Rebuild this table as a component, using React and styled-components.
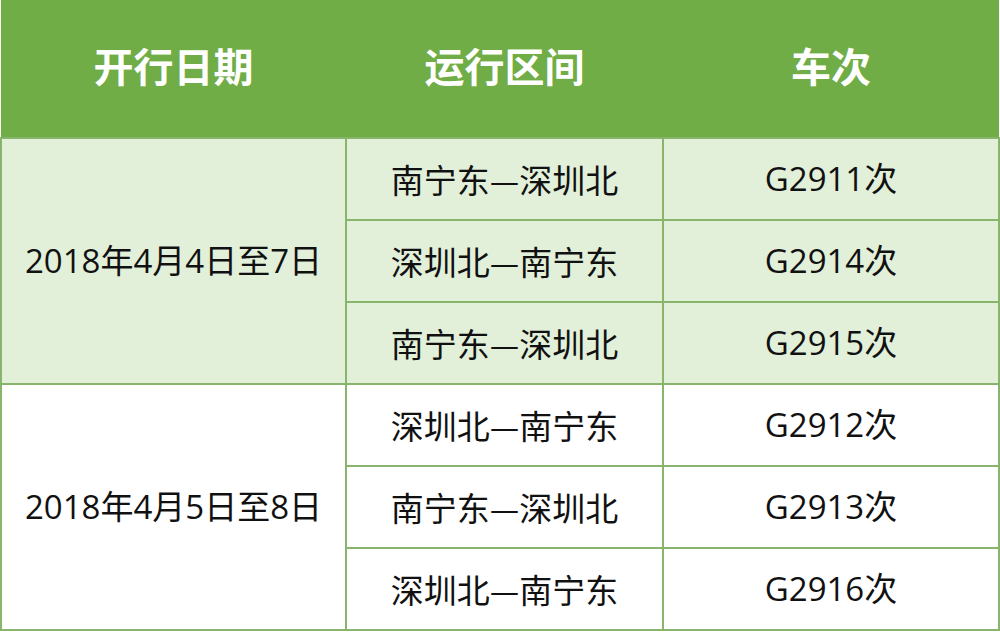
import React from "react";
import styled, { createGlobalStyle } from "styled-components";

const green = "#70ad47";
const lightGreen = "#e2efd9";
const line = "#88b46b";

const GlobalStyle = createGlobalStyle`
  html, body {
    margin: 0;
    padding: 0;
    background: #ffffff;
  }
  body {
    font-family: "Noto Sans CJK SC", "Noto Sans", sans-serif;
  }
`;

const Table = styled.table`
  width: 998px;
  border-collapse: collapse;
  table-layout: fixed;
`;

const HeadCell = styled.th`
  height: 129px;
  padding: 0 0 8px;
  background: ${green};
  color: #ffffff;
  font-size: 40px;
  line-height: 44px;
  font-weight: 700;
  text-align: center;
  vertical-align: middle;
`;

const Cell = styled.td`
  height: 80px;
  padding: 0;
  border: 2px solid ${line};
  background: ${(p) => (p.$shade ? lightGreen : "#ffffff")};
  color: #111111;
  font-size: 33px;
  line-height: 40px;
  font-family: ${(p) =>
    p.$latin
      ? `"Open Sans", "Noto Sans CJK SC", sans-serif`
      : `"Noto Sans CJK SC", sans-serif`};
  text-align: center;
  vertical-align: middle;
  white-space: nowrap;
`;

const groups = [
  {
    date: "2018年4月4日至7日",
    shade: true,
    trains: [
      ["南宁东—深圳北", "G2911次"],
      ["深圳北—南宁东", "G2914次"],
      ["南宁东—深圳北", "G2915次"],
    ],
  },
  {
    date: "2018年4月5日至8日",
    shade: false,
    trains: [
      ["深圳北—南宁东", "G2912次"],
      ["南宁东—深圳北", "G2913次"],
      ["深圳北—南宁东", "G2916次"],
    ],
  },
];

export default function App() {
  return (
    <>
      <GlobalStyle />
      <Table>
        <colgroup>
          <col style={{ width: 345 }} />
          <col style={{ width: 317 }} />
          <col style={{ width: 336 }} />
        </colgroup>
        <thead>
          <tr>
            <HeadCell>开行日期</HeadCell>
            <HeadCell>运行区间</HeadCell>
            <HeadCell>车次</HeadCell>
          </tr>
        </thead>
        <tbody>
          {groups.map((g) =>
            g.trains.map(([route, train], i) => (
              <tr key={g.date + i}>
                {i === 0 && (
                  <Cell rowSpan={g.trains.length} $shade={g.shade} $latin>
                    {g.date}
                  </Cell>
                )}
                <Cell $shade={g.shade}>{route}</Cell>
                <Cell $shade={g.shade} $latin>
                  {train}
                </Cell>
              </tr>
            ))
          )}
        </tbody>
      </Table>
    </>
  );
}
